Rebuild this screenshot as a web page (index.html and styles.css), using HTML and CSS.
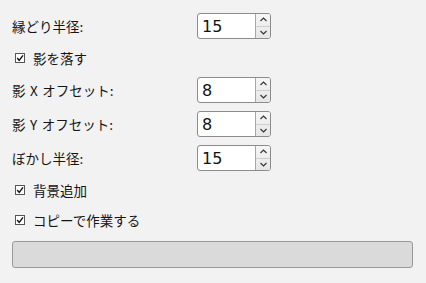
FILE: index.html
```html
<!DOCTYPE html>
<html lang="ja">
<head>
<meta charset="utf-8">
<link rel="stylesheet" href="styles.css">
</head>
<body>
<div class="panel">
  <div class="form">
    <div class="row spin-row">
      <span class="label">縁どり半径:</span>
      <div class="spin"><span class="value">15</span><div class="buttons"><span class="up"><svg width="7" height="5" viewBox="0 0 7 5"><path d="M0.5 4 L3.5 1 L6.5 4" fill="none" stroke="#333" stroke-width="1.1"/></svg></span><span class="down"><svg width="7" height="5" viewBox="0 0 7 5"><path d="M0.5 1 L3.5 4 L6.5 1" fill="none" stroke="#333" stroke-width="1.1"/></svg></span></div></div>
    </div>
    <div class="row check-row">
      <span class="check"><svg width="10" height="10" viewBox="0 0 10 10"><rect x="0.5" y="0.5" width="9" height="9" fill="#fff" stroke="#555"/><path d="M2.2 5 L4.2 7.4 L8 2.3" fill="none" stroke="#111" stroke-width="1.4"/></svg></span>
      <span class="label">影を落す</span>
    </div>
    <div class="row spin-row">
      <span class="label">影 X オフセット:</span>
      <div class="spin"><span class="value">8</span><div class="buttons"><span class="up"><svg width="7" height="5" viewBox="0 0 7 5"><path d="M0.5 4 L3.5 1 L6.5 4" fill="none" stroke="#333" stroke-width="1.1"/></svg></span><span class="down"><svg width="7" height="5" viewBox="0 0 7 5"><path d="M0.5 1 L3.5 4 L6.5 1" fill="none" stroke="#333" stroke-width="1.1"/></svg></span></div></div>
    </div>
    <div class="row spin-row">
      <span class="label">影 Y オフセット:</span>
      <div class="spin"><span class="value">8</span><div class="buttons"><span class="up"><svg width="7" height="5" viewBox="0 0 7 5"><path d="M0.5 4 L3.5 1 L6.5 4" fill="none" stroke="#333" stroke-width="1.1"/></svg></span><span class="down"><svg width="7" height="5" viewBox="0 0 7 5"><path d="M0.5 1 L3.5 4 L6.5 1" fill="none" stroke="#333" stroke-width="1.1"/></svg></span></div></div>
    </div>
    <div class="row spin-row">
      <span class="label">ぼかし半径:</span>
      <div class="spin"><span class="value">15</span><div class="buttons"><span class="up"><svg width="7" height="5" viewBox="0 0 7 5"><path d="M0.5 4 L3.5 1 L6.5 4" fill="none" stroke="#333" stroke-width="1.1"/></svg></span><span class="down"><svg width="7" height="5" viewBox="0 0 7 5"><path d="M0.5 1 L3.5 4 L6.5 1" fill="none" stroke="#333" stroke-width="1.1"/></svg></span></div></div>
    </div>
    <div class="row check-row">
      <span class="check"><svg width="10" height="10" viewBox="0 0 10 10"><rect x="0.5" y="0.5" width="9" height="9" fill="#fff" stroke="#555"/><path d="M2.2 5 L4.2 7.4 L8 2.3" fill="none" stroke="#111" stroke-width="1.4"/></svg></span>
      <span class="label">背景追加</span>
    </div>
    <div class="row check-row">
      <span class="check"><svg width="10" height="10" viewBox="0 0 10 10"><rect x="0.5" y="0.5" width="9" height="9" fill="#fff" stroke="#555"/><path d="M2.2 5 L4.2 7.4 L8 2.3" fill="none" stroke="#111" stroke-width="1.4"/></svg></span>
      <span class="label">コピーで作業する</span>
    </div>
  </div>
  <div class="progress"></div>
</div>
</body>
</html>
```

FILE: styles.css
```css
html, body {
  margin: 0;
  padding: 0;
  background: #f2f2f2;
}
body {
  width: 426px;
  height: 283px;
  overflow: hidden;
  font-family: "Noto Sans CJK JP", sans-serif;
  font-size: 13.5px;
  color: #151515;
}
.panel {
  padding: 13px 13px 0 12px;
}
.form {
  display: flex;
  flex-direction: column;
  gap: 8px;
}
.row {
  display: flex;
  align-items: center;
}
.spin-row {
  height: 26px;
}
.spin-row .label {
  width: 185px;
  word-spacing: 1.5px;
}
.check-row {
  height: 22px;
}
.check {
  display: flex;
  width: 10px;
  height: 10px;
  margin: 0 8px 0 3px;
}
.spin {
  display: flex;
  box-sizing: border-box;
  width: 74px;
  height: 26px;
  border: 1px solid #8c8c8c;
  border-radius: 3px;
  background: #fff;
  overflow: hidden;
}
.value {
  flex: 1;
  display: flex;
  align-items: center;
  padding-left: 4px;
  font-family: "DejaVu Sans", sans-serif;
  font-size: 16px;
  word-spacing: 0;
  color: #111;
}
.buttons {
  width: 14px;
  display: flex;
  flex-direction: column;
  border-left: 1px solid #a8a8a8;
  background: linear-gradient(#f6f6f6, #e6e6e6);
}
.buttons span {
  flex: 1;
  display: flex;
  align-items: center;
  justify-content: center;
}
.buttons .up {
  border-bottom: 1px solid #cfcfcf;
}
.progress {
  margin-top: 10px;
  box-sizing: border-box;
  height: 27px;
  border: 1px solid #9a9a9a;
  border-radius: 3px;
  background: #dadada;
}
```
